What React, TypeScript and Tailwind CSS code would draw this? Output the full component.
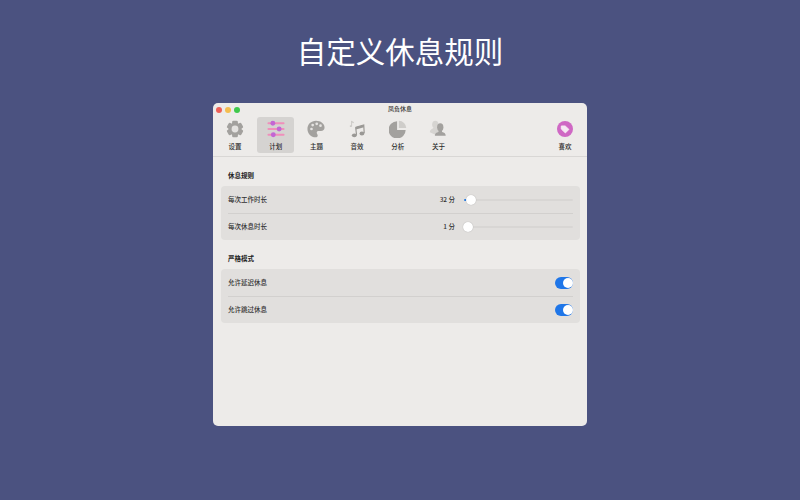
import React from "react";

const font = { fontFamily: '"Noto Sans CJK SC", "Liberation Sans", sans-serif' };

const Gear = () => (
  <svg width="18" height="18" viewBox="0 0 20 20">
    <g fill="#a3a19e">
      {[0, 60, 120, 180, 240, 300].map((a) => (
        <rect key={a} x="6.800" y="0.800" width="6.400" height="5" rx="1.500" transform={`rotate(${a} 10 10)`} />
      ))}
      <circle cx="10" cy="10" r="7.200" />
    </g>
    <circle cx="10" cy="10" r="3.800" fill="#e4e2e0" />
  </svg>
);

const Sliders = () => (
  <svg width="18" height="18" viewBox="0 0 20 20">
    <g fill="#f08fbb">
      <rect x="0.500" y="2.500" width="19" height="2.200" rx="1.100" />
      <rect x="0.500" y="8.900" width="19" height="2.200" rx="1.100" />
      <rect x="0.500" y="15.300" width="19" height="2.200" rx="1.100" />
    </g>
    <g fill="#c266d4">
      <circle cx="6.500" cy="3.600" r="2.700" />
      <circle cx="13.500" cy="10" r="2.700" />
      <circle cx="7" cy="16.400" r="2.700" />
    </g>
  </svg>
);

const Palette = () => (
  <svg width="18" height="18" viewBox="0 0 20 20">
    <path
      d="M10 .8C4.500.8.500 4.800.500 9.900c0 5.200 4.200 9.300 9 9.300 1.700 0 2.400-1 2.400-2.100 0-1.400-1.100-1.700-1.100-3 0-1.100.9-1.800 2-1.800h2.700c2.400 0 4-1.600 4-4C19.500 4 15.200.8 10 .8z"
      fill="#a3a19e"
    />
    <g fill="#e6e4e2">
      <circle cx="5" cy="10" r="1.500" />
      <circle cx="6.300" cy="5.600" r="1.500" />
      <circle cx="10.800" cy="4.200" r="1.500" />
      <circle cx="15" cy="6.300" r="1.500" />
    </g>
  </svg>
);

const Music = () => (
  <svg width="18" height="18" viewBox="0 0 20 20">
    <path d="M8.500 8 9.500 16.500M8.500 8 17.500 5.500 18 14.500" fill="none" stroke="#9a9895" strokeWidth="1.300" />
    <path d="M8.500 8 17.500 5.500 17.700 8 8.800 10.500z" fill="#9a9895" />
    <ellipse cx="7" cy="17" rx="2.700" ry="2.100" fill="#9a9895" />
    <ellipse cx="15.500" cy="15" rx="2.700" ry="2.100" fill="#9a9895" />
    <path d="M4 1v5.500" stroke="#c9c7c4" strokeWidth="1" />
    <path d="M4 1l2.300 1.200v1.500L4 2.600z" fill="#c9c7c4" />
    <ellipse cx="3.200" cy="6.800" rx="1.300" ry="1" fill="#c9c7c4" />
  </svg>
);

const Pie = () => (
  <svg width="18" height="18" viewBox="0 0 20 20">
    <path d="M9 1.500v9.500h9.500A9.500 9.500 0 1 1 9 1.500z" fill="#a3a19e" />
    <path d="M11 .8A8.500 8.500 0 0 1 19.200 9H11z" fill="#cfcdca" />
  </svg>
);

const People = () => (
  <svg width="18" height="18" viewBox="0 0 20 20">
    <g fill="#d6d4d1">
      <ellipse cx="7" cy="5" rx="3.500" ry="4.200" />
      <path d="M1 13.500c0-3 2.500-3.500 4-5h4l3 5-5 3z" />
    </g>
    <g fill="#a3a19e">
      <ellipse cx="12.500" cy="8" rx="3.500" ry="4.300" />
      <path d="M10.800 11.500h3.400l.4 1.700c2 .6 4 1.200 4 4.300H6.500c0-3.100 2-3.700 4-4.300z" />
    </g>
  </svg>
);

const Tag = () => (
  <svg width="18" height="18" viewBox="0 0 18 18">
    <circle cx="9" cy="9" r="8" fill="#cf68c4" />
    <path d="M5.300 6h3.900l3.700 3.400-3.500 3.500-4.100-3.900z" fill="#f6e9f3" stroke="#f6e9f3" strokeLinejoin="round" strokeWidth="1" />
  </svg>
);

const tabs = [
  { label: "设置", icon: <Gear /> },
  { label: "计划", icon: <Sliders />, active: true },
  { label: "主题", icon: <Palette /> },
  { label: "音效", icon: <Music /> },
  { label: "分析", icon: <Pie /> },
  { label: "关于", icon: <People /> },
];

function Tab({ label, icon, active }: { label: string; icon: React.ReactNode; active?: boolean }) {
  return (
    <div className={`flex h-9 w-[37px] flex-col items-center rounded-[3px] pt-[2.500px] ${active ? "bg-[#d5d3d1]" : ""}`}>
      {icon}
      <span className="mt-[4px] text-[6.500px] leading-[9px] font-medium text-[#2c2c2c]">{label}</span>
    </div>
  );
}

function Slider({ value, thumb }: { value: string; thumb: number }) {
  return (
    <div className="flex items-center">
      <span className="w-[50px] text-right text-[6.500px] font-medium text-[#333]">{value}</span>
      <div className="relative ml-[9px] h-[2px] w-[109px] rounded-full bg-[#d8d6d4]">
        <div className="h-full rounded-l-full bg-[#2a7de1]" style={{ width: thumb - 3 }} />
        <div
          className="absolute top-[-4px] h-[10px] w-[10px] rounded-full bg-white shadow-[0_0_1px_rgba(0,0,0,0.3)]"
          style={{ left: thumb - 5 }}
        />
      </div>
    </div>
  );
}

function Toggle() {
  return (
    <div className="flex h-[12px] w-[18px] items-center justify-end rounded-full bg-[#1f76e8] pr-[0.500px]">
      <div className="h-[10px] w-[10px] rounded-full bg-white" />
    </div>
  );
}

function Row({ label, children }: { label: string; children: React.ReactNode }) {
  return (
    <div className="flex h-[26.500px] items-center justify-between pt-[0.500px]">
      <span className="text-[6.500px] font-medium text-[#333]">{label}</span>
      {children}
    </div>
  );
}

function Section({ title, children }: { title: string; children: React.ReactNode }) {
  return (
    <section>
      <h2 className="mb-[5px] h-[11px] pl-[15px] text-[6.500px] leading-[11px] font-bold text-[#222]">{title}</h2>
      <div className="ml-[8px] mr-[7px] rounded-[4px] bg-[#e1dfdd] px-[7px]">{children}</div>
    </section>
  );
}

export default function App() {
  return (
    <div className="flex h-[500px] w-[800px] flex-col items-center overflow-hidden bg-[#4b5280]" style={font}>
      <h1 className="mt-[28px] h-[44px] text-[29.500px] leading-[44px] font-normal text-white">自定义休息规则</h1>
      <div className="mt-[31px] flex h-[323px] w-[374px] flex-col rounded-[5px] bg-[#edebe9]">
        <header className="h-[54px] border-b border-[#d9d7d5]">
          <div className="relative flex h-[14px] items-center justify-center pb-[3px]">
            <span className="text-[6px] leading-[11px] font-medium text-[#333]">凤负休息</span>
            <div className="absolute top-[3.500px] left-[3px] flex gap-[3px]">
              <span className="h-[6px] w-[6px] rounded-full bg-[#ed5f57]" />
              <span className="h-[6px] w-[6px] rounded-full bg-[#f4bd4f]" />
              <span className="h-[6px] w-[6px] rounded-full bg-[#3fc84c]" />
            </div>
          </div>
          <div className="flex items-start justify-between pr-[3.500px] pl-[3.500px]">
            <div className="flex gap-[3.700px]">
              {tabs.map((t) => (
                <Tab key={t.label} {...t} />
              ))}
            </div>
            <Tab label="喜欢" icon={<Tag />} />
          </div>
        </header>
        <div className="flex flex-col gap-[13px] pt-[13px]">
          <Section title="休息规则">
            <Row label="每次工作时长"><Slider value="32 分" thumb={7} /></Row>
            <div className="h-px bg-[#d2d0ce]" />
            <Row label="每次休息时长"><Slider value="1 分" thumb={4} /></Row>
          </Section>
          <Section title="严格模式">
            <Row label="允许延迟休息"><Toggle /></Row>
            <div className="h-px bg-[#d2d0ce]" />
            <Row label="允许跳过休息"><Toggle /></Row>
          </Section>
        </div>
      </div>
    </div>
  );
}
